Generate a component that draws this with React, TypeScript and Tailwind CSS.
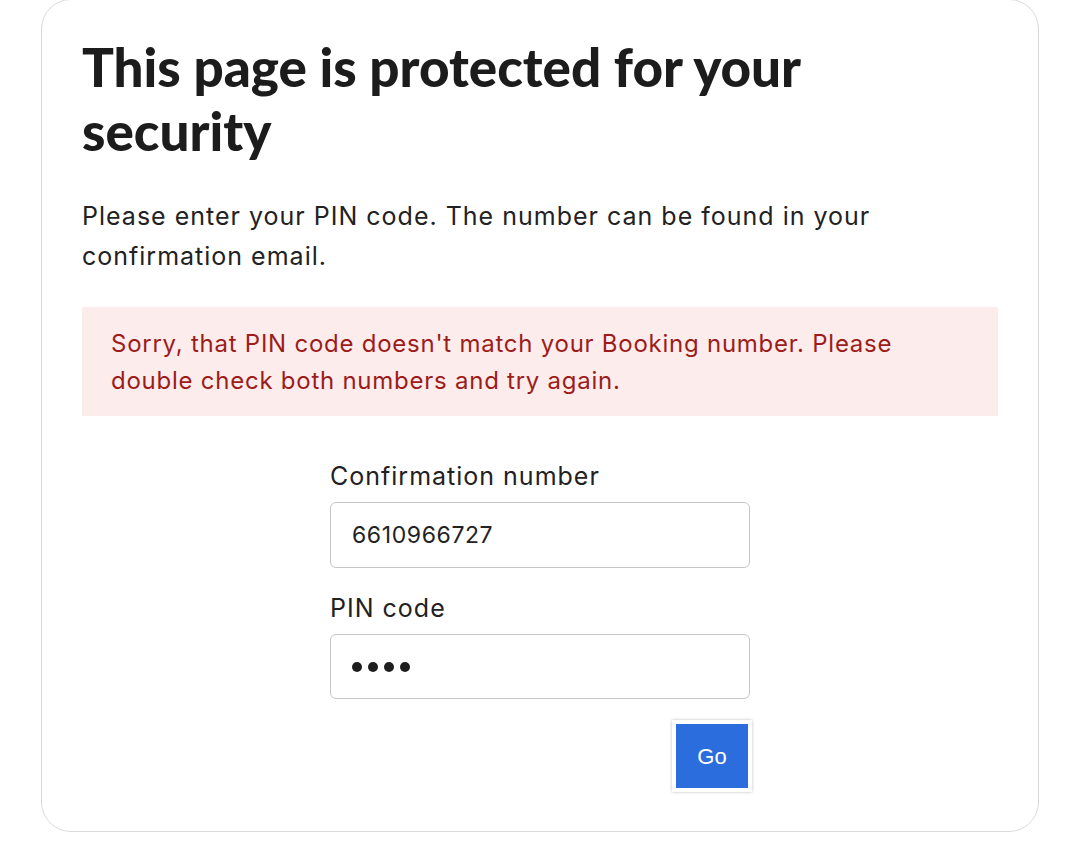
import React from "react";

export default function App() {
  return (
    <div className="min-h-[866px] bg-white pl-[41px] pr-[35px]" style={{ fontFamily: "Inter, 'Liberation Sans', sans-serif" }}>
      <div className="w-[998px] h-[833px] -mt-[1px] rounded-[30px] border-[1.5px] border-[#dadada] px-[40px] pt-[35px]">
        <h1
          className="text-[53px] leading-[64px] font-black text-[#1c1c1c]"
          style={{ fontFamily: "Lato, 'Noto Sans', sans-serif" }}
        >
          This page is protected for your
          <br />
          security
        </h1>
        <p className="mt-[33px] text-[25px] leading-[40px] tracking-[1px] text-[#222222]">
          Please enter your PIN code. The number can be found in your
          <br />
          confirmation email.
        </p>
        <div className="mt-[31px] bg-[#fcecec] px-[29px] pt-[18px] pb-[17px] text-[24px] leading-[37px] tracking-[0.75px] text-[#9c1c1a]">
          Sorry, that PIN code doesn't match your Booking number. Please
          <br />
          double check both numbers and try again.
        </div>
        <div className="mx-auto mt-[40px] w-[420px] flex flex-col">
          <label className="text-[25px] leading-[40px] tracking-[1px] text-[#222222]">Confirmation number</label>
          <input
            readOnly
            value="6610966727"
            className="mt-[6px] h-[66px] w-[420px] rounded-[6px] border-[1.5px] border-[#c6c6c6] px-[21px] text-[23px] tracking-[0.6px] text-[#222222] outline-none"
          />
          <label className="mt-[20px] text-[25px] leading-[40px] tracking-[1px] text-[#222222]">PIN code</label>
          <div className="mt-[6px] h-[65px] w-[420px] rounded-[6px] border-[1.5px] border-[#c6c6c6] px-[21px] flex items-center gap-[6px]" role="textbox" aria-label="PIN code">
            <span className="h-[10px] w-[10px] rounded-full bg-[#1e1e1e]" />
            <span className="h-[10px] w-[10px] rounded-full bg-[#1e1e1e]" />
            <span className="h-[10px] w-[10px] rounded-full bg-[#1e1e1e]" />
            <span className="h-[10px] w-[10px] rounded-full bg-[#1e1e1e]" />
          </div>
          <div className="mt-[21px] flex justify-end -mr-[2px]">
            <button className="h-[72px] w-[80px] border-[4px] border-white bg-[#2c6ddd] text-[22px] text-white shadow-[0_0_3px_rgba(0,0,0,0.25)]" style={{ fontFamily: "'Liberation Sans', Arial, sans-serif" }}>
              Go
            </button>
          </div>
        </div>
      </div>
    </div>
  );
}
